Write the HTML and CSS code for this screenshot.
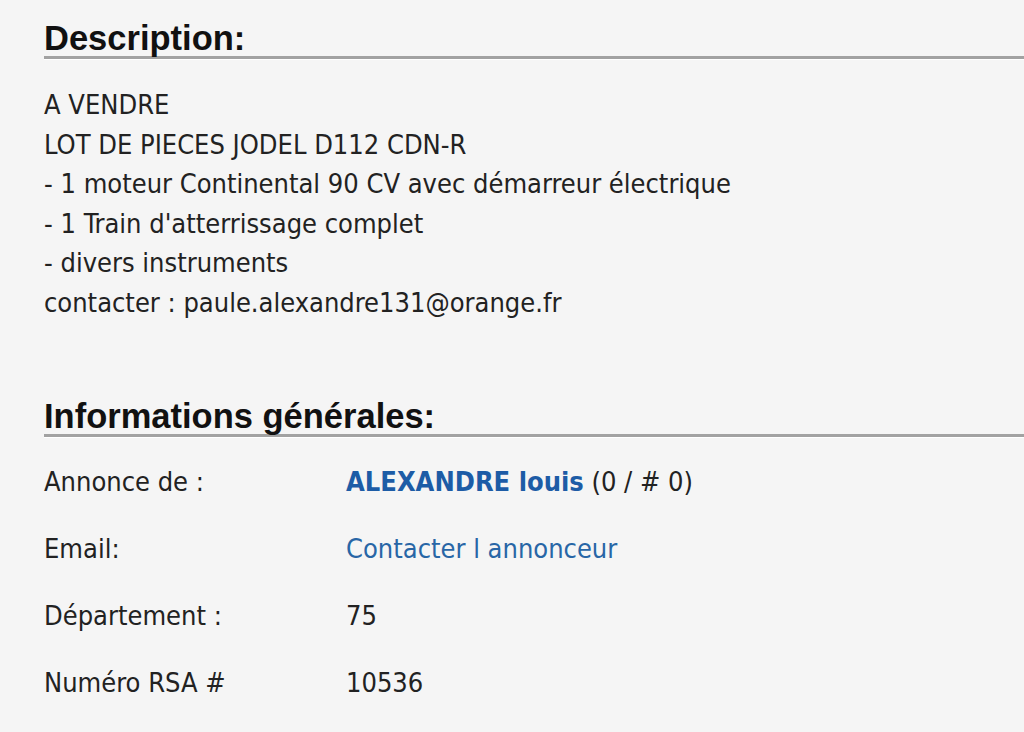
FILE: index.html
```html
<!DOCTYPE html>
<html lang="fr">
<head>
  <meta charset="UTF-8">
  <title>Annonce - lot de pièces Jodel D112</title>
  <link rel="stylesheet" href="styles.css">
</head>
<body>
  <div class="annonce">
    <h2 class="titre">Description:</h2>
    <div class="description">
      A VENDRE<br>
      LOT DE PIECES JODEL D112 CDN-R<br>
      - 1 moteur Continental 90 CV avec démarreur électrique<br>
      - 1 Train d'atterrissage complet<br>
      - divers instruments<br>
      contacter : paule.alexandre131@orange.fr
    </div>

    <h2 class="titre">Informations générales:</h2>
    <table class="infos">
      <tr>
        <td class="label">Annonce de :</td>
        <td><a class="auteur" href="#">ALEXANDRE louis</a> (0 / # 0)</td>
      </tr>
      <tr>
        <td class="label">Email:</td>
        <td><a class="lien" href="#">Contacter l annonceur</a></td>
      </tr>
      <tr>
        <td class="label">Département :</td>
        <td>75</td>
      </tr>
      <tr>
        <td class="label">Numéro RSA #</td>
        <td>10536</td>
      </tr>
    </table>
  </div>
</body>
</html>
```

FILE: styles.css
```css
body {
  margin: 0;
  background: #f5f5f5;
  color: #222;
  font-family: "DejaVu Sans Condensed", "DejaVu Sans", sans-serif;
  font-size: 27px;
}
.annonce {
  padding: 18px 0 0 44px;
}
.titre {
  font-family: "Liberation Sans", Arial, sans-serif;
  font-size: 34.5px;
  font-weight: bold;
  color: #111;
  margin: 0;
  padding-top: 2px;
  line-height: 36px;
  border-bottom: 3px solid #a2a2a2;
  box-shadow: 0 1px 0 #fff;
}
.description {
  line-height: 39.5px;
  padding: 26px 0 74px 0;
}
.infos {
  border-collapse: collapse;
  margin-top: 11px;
}
.infos td {
  padding: 0;
  height: 67px;
}
.infos .label {
  width: 302px;
}
.infos a {
  text-decoration: none;
}
.auteur {
  color: #1d5ca6;
  font-weight: bold;
}
.lien {
  color: #2866a6;
}
```
